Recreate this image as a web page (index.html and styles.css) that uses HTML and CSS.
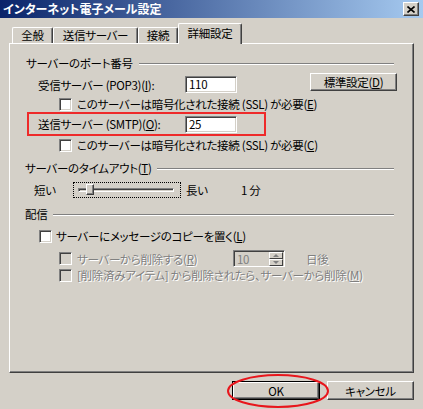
FILE: index.html
```html
<!DOCTYPE html>
<html lang="ja">
<head>
<meta charset="utf-8">
<title>インターネット電子メール設定</title>
<link rel="stylesheet" href="styles.css">
</head>
<body>
<div class="window">
  <div class="titlebar">
    <span class="title">インターネット電子メール設定</span>
    <span class="close"><svg width="8" height="7" viewBox="0 0 8 7"><path d="M0.5 0.5 L7.5 6.5 M7.5 0.5 L0.5 6.5" stroke="#000" stroke-width="1.6" fill="none"/></svg></span>
  </div>
  <div class="tabs">
    <div class="tab t1">全般</div>
    <div class="tab t2">送信サーバー</div>
    <div class="tab t3">接続</div>
    <div class="tab sel">詳細設定</div>
  </div>
  <div class="panel">
    <div class="heading h1"><span>サーバーのポート番号</span><i class="rule"></i></div>
    <div class="row pop">
      <span class="lbl">受信サーバー (POP3)(<u>I</u>):</span>
      <span class="input">110</span>
      <span class="btn std">標準設定(<u>D</u>)</span>
    </div>
    <div class="row cbrow cb1"><span class="cb"></span><span>このサーバーは暗号化された接続 (SSL) が必要(<u>E</u>)</span></div>
    <div class="row smtp">
      <span class="lbl">送信サーバー (SMTP)(<u>O</u>):</span>
      <span class="input">25</span>
    </div>
    <div class="row cbrow cb2"><span class="cb"></span><span>このサーバーは暗号化された接続 (SSL) が必要(<u>C</u>)</span></div>
    <div class="heading h2"><span>サーバーのタイムアウト(<u>T</u>)</span><i class="rule"></i></div>
    <div class="row slrow">
      <span class="short">短い</span>
      <span class="slider"><span class="track"><span class="thumb"></span></span></span>
      <span class="long">長い</span>
      <span>1 分</span>
    </div>
    <div class="heading h3"><span>配信</span><i class="rule"></i></div>
    <div class="row cbrow cb3"><span class="cb"></span><span>サーバーにメッセージのコピーを置く(<u>L</u>)</span></div>
    <div class="row cbrow cb4 dis">
      <span class="cb off"></span><span class="dlbl">サーバーから削除する(<u>R</u>)</span>
      <span class="spin"><span class="spinval">10</span><span class="arrows"><span class="ar up"></span><span class="ar dn"></span></span></span>
      <span class="days">日後</span>
    </div>
    <div class="row cbrow cb5 dis"><span class="cb off"></span><span>[削除済みアイテム] から削除されたら、サーバーから削除(<u>M</u>)</span></div>
  </div>
  <div class="buttons">
    <span class="okwrap">
      <span class="btn ok">OK</span>
      <svg class="ring" width="104" height="36" viewBox="0 0 104 36"><ellipse cx="52" cy="18" rx="50" ry="16" fill="none" stroke="#e8161c" stroke-width="2"/></svg>
    </span>
    <span class="btn cancel">キャンセル</span>
  </div>
</div>
</body>
</html>
```
FILE: styles.css
```css
* { box-sizing: border-box; }
html, body { margin: 0; padding: 0; }
body {
  width: 423px;
  height: 409px;
  overflow: hidden;
  background: #d4d0c8;
  font-family: "Noto Sans CJK JP", "Noto Sans", sans-serif;
  font-size: 11.5px;
  letter-spacing: -0.3px;
  font-feature-settings: "palt";
  color: #000;
}
u { text-decoration: underline; text-underline-offset: 1px; }
.window {
  width: 423px;
  height: 409px;
  display: flex;
  flex-direction: column;
}
.titlebar {
  height: 18px;
  display: flex;
  align-items: center;
  background: linear-gradient(to right, #0a246a, #a6caf0);
  padding-left: 3px;
  padding-right: 4px;
}
.title {
  color: #fff;
  font-weight: bold;
  font-size: 12px;
  letter-spacing: 0;
  line-height: 18px;
  flex: 1;
}
.close {
  width: 16px;
  height: 14px;
  background: #d4d0c8;
  border-top: 1px solid #fff;
  border-left: 1px solid #fff;
  border-right: 1px solid #404040;
  border-bottom: 1px solid #404040;
  box-shadow: inset -1px -1px 0 #808080;
  display: flex;
  align-items: center;
  justify-content: center;
}
.close svg { display: block; }
.tabs {
  height: 25px;
  display: flex;
  align-items: flex-end;
  padding-left: 12px;
  position: relative;
  z-index: 2;
}
.tab {
  height: 16px;
  line-height: 15px;
  text-align: center;
  border-top: 1px solid #fff;
  border-left: 1px solid #fff;
  border-right: 1px solid #404040;
  box-shadow: inset -1px 0 0 #808080;
  border-radius: 2px 2px 0 0;
  background: #d4d0c8;
}
.t1 { width: 41px; }
.t2 { width: 85px; }
.t3 { width: 40px; }
.sel {
  width: 64px;
  height: 21px;
  line-height: 18px;
  margin-bottom: -1px;
}
.panel {
  margin-left: 9px;
  width: 405px;
  height: 330px;
  border-top: 1px solid #fff;
  border-left: 1px solid #fff;
  border-right: 1px solid #404040;
  border-bottom: 1px solid #404040;
  box-shadow: inset -1px -1px 0 #808080;
  display: flex;
  flex-direction: column;
  position: relative;
  z-index: 1;
}
.heading {
  display: flex;
  align-items: center;
  height: 14px;
  line-height: 14px;
  margin-right: 19px;
}
.rule {
  flex: 1;
  height: 0;
  border-top: 1px solid #808080;
  border-bottom: 1px solid #fff;
  margin-left: 6px;
  margin-top: 2px;
}
.h1 { margin-top: 12px; margin-left: 16px; }
.h2 { margin-top: 9px; margin-left: 15px; }
.h3 { margin-top: 9px; margin-left: 15px; }
.row { display: flex; align-items: center; }
.lbl { width: 147px; }
.input {
  width: 52px;
  height: 17px;
  background: #fff;
  border-top: 1px solid #808080;
  border-left: 1px solid #808080;
  border-right: 1px solid #fff;
  border-bottom: 1px solid #fff;
  box-shadow: inset 1px 1px 0 #404040, inset -1px -1px 0 #d4d0c8;
  padding-left: 3px;
  line-height: 15px;
}
.pop { margin-top: 6px; height: 17px; margin-left: 28px; }
.btn {
  display: flex;
  align-items: center;
  justify-content: center;
  background: #d4d0c8;
  border-top: 1px solid #fff;
  border-left: 1px solid #fff;
  border-right: 1px solid #404040;
  border-bottom: 1px solid #404040;
  box-shadow: inset -1px -1px 0 #808080;
}
.std {
  width: 87px;
  height: 18px;
  margin-left: auto;
  margin-right: 16px;
  align-self: flex-start;
  margin-top: -3px;
}
.cbrow { height: 14px; gap: 5px; }
.cb {
  width: 13px;
  height: 13px;
  flex: none;
  background: #fff;
  border-top: 1px solid #808080;
  border-left: 1px solid #808080;
  border-right: 1px solid #fff;
  border-bottom: 1px solid #fff;
  box-shadow: inset 1px 1px 0 #404040, inset -1px -1px 0 #d4d0c8;
}
.cb.off { background: #d4d0c8; }
.cb1 { margin-top: 4px; margin-left: 49px; }
.smtp {
  margin-top: 1px;
  margin-left: 17px;
  width: 239px;
  height: 24px;
  border: 2px solid #ee2a2a;
  padding-left: 9px;
}
.cb2 { margin-top: 2px; margin-left: 49px; }
.slrow { margin-top: 7px; height: 16px; margin-left: 24px; }
.short { width: 39px; }
.slider {
  width: 108px;
  height: 16px;
  border: 1px dotted #000;
  display: flex;
  align-items: center;
  padding-left: 4px;
}
.track {
  position: relative;
  width: 96px;
  height: 4px;
  border-top: 1px solid #808080;
  border-left: 1px solid #808080;
  border-right: 1px solid #fff;
  border-bottom: 1px solid #fff;
  box-shadow: inset 1px 1px 0 #404040;
}
.thumb {
  position: absolute;
  left: 7px;
  top: -5px;
  width: 8px;
  height: 11px;
  background: #d4d0c8;
  border-top: 1px solid #fff;
  border-left: 1px solid #fff;
  border-right: 1px solid #404040;
  border-bottom: 1px solid #404040;
  box-shadow: inset -1px -1px 0 #808080;
}
.long { margin-left: 5px; width: 55px; }
.cb3 { margin-top: 8px; margin-left: 29px; gap: 4px; }
.cb4 { margin-top: 7px; height: 17px; margin-left: 49px; }
.cb5 { margin-top: 1px; margin-left: 49px; }
.dis { color: #808080; text-shadow: 1px 1px 0 #fff; }
.dlbl { width: 151px; }
.spin {
  width: 52px;
  height: 17px;
  display: flex;
  background: #d4d0c8;
  border-top: 1px solid #808080;
  border-left: 1px solid #808080;
  border-right: 1px solid #fff;
  border-bottom: 1px solid #fff;
  box-shadow: inset 1px 1px 0 #404040;
  text-shadow: none;
}
.spinval { flex: 1; padding-left: 3px; line-height: 14px; padding-top: 1px; }
.arrows { width: 15px; display: flex; flex-direction: column; padding: 1px 1px 0 0; }
.ar {
  flex: 1;
  background: #d4d0c8;
  border-top: 1px solid #fff;
  border-left: 1px solid #fff;
  border-right: 1px solid #404040;
  border-bottom: 1px solid #404040;
  display: flex;
  align-items: center;
  justify-content: center;
}
.ar::after {
  content: "";
  width: 0;
  height: 0;
  border-left: 3px solid transparent;
  border-right: 3px solid transparent;
}
.up::after { border-bottom: 3px solid #808080; }
.dn::after { border-top: 3px solid #808080; }
.days { margin-left: 16px; }
.buttons {
  margin-top: 8px;
  display: flex;
  justify-content: flex-end;
  gap: 7px;
  padding-right: 9px;
}
.okwrap { position: relative; display: flex; }
.ok {
  width: 88px;
  height: 19px;
  border: 1px solid #000;
  box-shadow: inset 1px 1px 0 #fff, inset -1px -1px 0 #404040, inset -2px -2px 0 #808080;
}
.ring {
  position: absolute;
  left: -6px;
  top: -8px;
  pointer-events: none;
}
.cancel { width: 87px; height: 19px; }
```
